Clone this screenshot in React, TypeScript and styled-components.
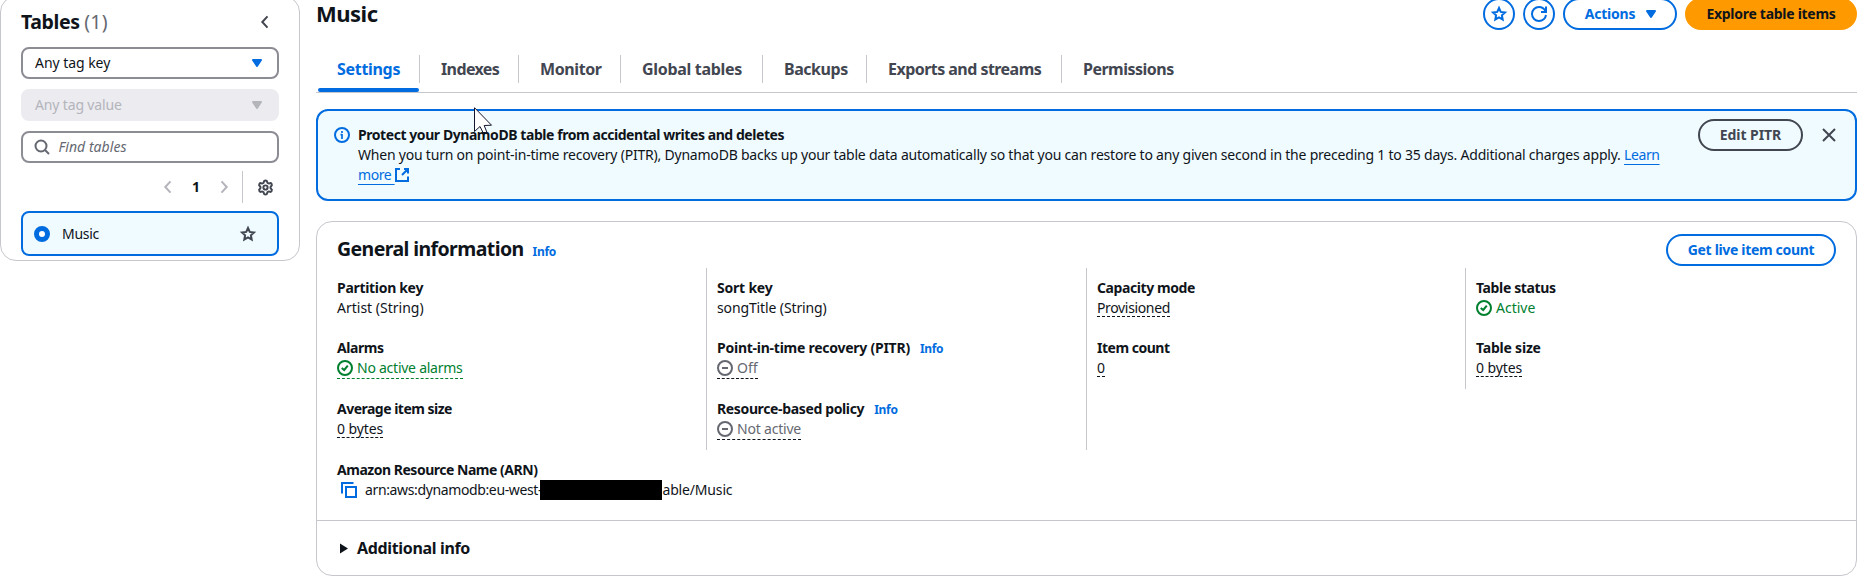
import React from "react";
import styled, { createGlobalStyle, css } from "styled-components";
import { Settings } from "lucide-react";

const color = {
  text: "#0f141a",
  muted: "#656871",
  icon: "#424650",
  blue: "#006ce0",
  paleBlue: "#f0fbff",
  green: "#00802f",
  line: "#c6c6cd",
  field: "#8c8c94",
  disabled: "#b4b4bb",
  disabledBg: "#ebebf0",
  orange: "#ff9900",
};

const GlobalStyle = createGlobalStyle`
  *, *::before, *::after { box-sizing: border-box; }
  body {
    margin: 0;
    background: #fff;
    color: ${color.text};
    font: 400 14px/20px "Noto Sans", sans-serif;
    overflow: hidden;
  }
  button { font: inherit; cursor: pointer; }
  svg { display: block; flex: none; }
`;

/* ---------- text ---------- */

interface TextProps {
  $track?: number;
  $bold?: boolean;
}

const Text = styled.span<TextProps>`
  white-space: nowrap;
  letter-spacing: ${(p) => (p.$track ?? 0) - (p.$bold ? 0.21 : 0)}px;
  font-weight: ${(p) => (p.$bold ? 700 : 400)};
`;

const InfoLink = styled.a`
  color: ${color.blue};
  font-size: 12px;
  font-weight: 700;
  letter-spacing: -0.3px;
`;

/* ---------- icons ---------- */

const Stroke = styled.svg.attrs({ viewBox: "0 0 16 16", width: 16, height: 16 })`
  fill: none;
  stroke: currentColor;
  stroke-width: 2;
  overflow: visible;
`;

const CaretDown = () => (
  <Stroke>
    <path d="M4 5h8l-4 6-4-6Z" fill="currentColor" strokeLinejoin="round" />
  </Stroke>
);
const ChevronLeft = () => (
  <Stroke>
    <path d="M10.5 2.3 5.3 8l5.2 5.7" />
  </Stroke>
);
const ChevronRight = () => (
  <Stroke>
    <path d="m5.5 2.3 5.2 5.7-5.2 5.7" />
  </Stroke>
);
const SearchIcon = () => (
  <Stroke>
    <circle cx="7" cy="7" r="5.5" />
    <path d="m11 11 4 4" />
  </Stroke>
);
const StarIcon = () => (
  <Stroke>
    <path d="m8 2 1.75 3.9 4.25.5-3.1 2.9.8 4.3L8 11.5l-3.7 2.1.8-4.3L2 6.4l4.25-.5L8 2Z" />
  </Stroke>
);
const RefreshIcon = () => (
  <Stroke>
    <path d="M15 9c-.5 3.5-3.400 6-7 6-3.900 0-7-3.100-7-7s3.100-7 7-7c2.900 0 5.300 1.700 6.400 4.200" />
    <path d="M10 6h5V.5" />
  </Stroke>
);
const InfoIcon = () => (
  <Stroke>
    <circle cx="8" cy="8" r="7" />
    <path d="M8 4v2M6.500 7.700H8M8 7v5" strokeWidth="1.7" />
  </Stroke>
);
const CheckIcon = () => (
  <Stroke>
    <circle cx="8" cy="8" r="7" />
    <path d="m4.700 8 2.500 2 3.600-4.300" />
  </Stroke>
);
const MinusIcon = () => (
  <Stroke>
    <circle cx="8" cy="8" r="7" />
    <path d="M5 8h6" />
  </Stroke>
);
const CloseIcon = () => (
  <Stroke>
    <path d="m2 2 12 12M14 2 2 14" />
  </Stroke>
);
const CopyIcon = () => (
  <Stroke>
    <path d="M5 5h10v10H5zM1 11.500V1h11.500" />
  </Stroke>
);
const ExternalIcon = () => (
  <Stroke>
    <path d="M10 2h4v4.500M8 8l6-6M14 9.500V14H2V2h4" />
  </Stroke>
);

/* ---------- page ---------- */

const Page = styled.div`
  display: flex;
  align-items: flex-start;
  gap: 16px;
  height: 580px;
  padding-right: 7px;
`;

const Sidebar = styled.aside`
  width: 300px;
  flex: none;
  margin-top: -4px;
  padding: 13px 20px 4px;
  border: 1px solid ${color.line};
  border-radius: 16px;
`;

const SidebarHead = styled.div`
  display: flex;
  align-items: center;
  justify-content: space-between;
  height: 24px;
  margin-bottom: 13px;
  padding-right: 6px;
  color: ${color.icon};
`;

const SidebarTitle = styled.h2`
  margin: 0;
  color: ${color.text};
  font-size: 19.5px;
  font-weight: 700;
  letter-spacing: -0.4px;
  line-height: 24px;

  span {
    color: ${color.muted};
    font-weight: 400;
    letter-spacing: 0.3px;
  }
`;

const Field = styled.div<{ $disabled?: boolean }>`
  display: flex;
  align-items: center;
  justify-content: space-between;
  height: 32px;
  margin-bottom: 10px;
  padding: 0 12px;
  border: 2px solid ${(p) => (p.$disabled ? color.disabledBg : color.field)};
  border-radius: 8px;
  background: ${(p) => (p.$disabled ? color.disabledBg : "#fff")};
  color: ${(p) => (p.$disabled ? color.disabled : color.text)};

  svg {
    color: ${(p) => (p.$disabled ? color.disabled : color.blue)};
  }
`;

const SearchField = styled(Field)`
  justify-content: flex-start;
  gap: 9px;
  margin-bottom: 8px;
  padding: 0 10.5px;
  color: ${color.muted};
  font-style: italic;

  svg {
    color: ${color.muted};
  }
`;

const Pager = styled.div`
  display: flex;
  align-items: center;
  justify-content: flex-end;
  height: 32px;
  margin-bottom: 8px;
  padding-right: 5.5px;
  color: ${color.disabled};

  b {
    width: 40px;
    color: ${color.text};
    font-weight: 700;
    text-align: center;
  }
`;

const PagerDivider = styled.i`
  width: 1px;
  height: 32px;
  margin: 0 13.5px 0 10px;
  background: ${color.line};
`;

const TableCard = styled.div`
  display: flex;
  align-items: center;
  height: 45px;
  padding: 0 21px 0 11px;
  border: 2px solid ${color.blue};
  border-radius: 8px;
  background: ${color.paleBlue};

  svg {
    margin-left: auto;
    color: ${color.icon};
  }
`;

const Radio = styled.i`
  width: 16px;
  height: 16px;
  margin-right: 12px;
  border: 5px solid ${color.blue};
  border-radius: 50%;
  background: #fff;
`;

const Main = styled.main`
  position: relative;
  flex: 1;
  min-width: 0;
  margin-top: -2px;
`;

const Header = styled.header`
  display: flex;
  align-items: center;
  justify-content: space-between;
  height: 32px;
  margin-bottom: 16px;
`;

const Title = styled.h1`
  margin: 0 0 2px;
  font-size: 22px;
  font-weight: 700;
  letter-spacing: -0.5px;
  line-height: 30px;
`;

const ButtonRow = styled.div`
  display: flex;
  gap: 8px;
`;

type Tone = "blue" | "dark" | "primary";

const Button = styled.button<{ $tone?: Tone; $width: number; $menu?: boolean }>`
  display: flex;
  align-items: center;
  justify-content: center;
  gap: 8px;
  flex: none;
  width: ${(p) => p.$width}px;
  height: 32px;
  padding: 0 0 0 ${(p) => (p.$menu ? 4 : 0)}px;
  border: 2px solid;
  border-radius: 16px;
  background: transparent;
  color: ${(p) => (p.$tone === "dark" ? color.icon : color.blue)};
  ${(p) =>
    p.$tone === "primary" &&
    css`
      border-color: ${color.orange};
      background: ${color.orange};
      color: ${color.text};
    `}
`;

const Tabs = styled.nav`
  display: flex;
  height: 47px;
  margin-bottom: 16px;
  border-bottom: 1px solid ${color.line};
`;

const Tab = styled.a<{ $width: number; $active?: boolean }>`
  position: relative;
  display: flex;
  align-items: center;
  justify-content: space-between;
  width: ${(p) => p.$width}px;
  padding-left: 21px;
  color: ${(p) => (p.$active ? color.blue : color.icon)};
  font-size: 16px;

  &:not(:last-child)::after {
    content: "";
    width: 1px;
    height: 28px;
    background: ${color.line};
  }

  ${(p) =>
    p.$active &&
    css`
      &::before {
        content: "";
        position: absolute;
        inset: auto 1px 0 2px;
        height: 4px;
        border-radius: 2px;
        background: ${color.blue};
      }
    `}
`;

const Alert = styled.section`
  display: flex;
  align-items: flex-start;
  height: 92px;
  margin-bottom: 20px;
  padding: 8px 18px 0 16px;
  border: 2px solid ${color.blue};
  border-radius: 12px;
  background: ${color.paleBlue};
`;

const AlertIcon = styled.div`
  padding: 8px 8px 0 0;
  color: ${color.blue};
`;

const AlertBody = styled.div`
  flex: 1;
  margin-right: 12px;
  padding-top: 6px;

  p {
    margin: 0;
    letter-spacing: -0.212px;
  }
`;

const Link = styled.a`
  color: ${color.blue};
  letter-spacing: -0.4px;
  text-decoration: underline 1px;
  text-underline-offset: 4px;
  text-decoration-skip-ink: none;
`;

const LinkIcon = styled.span`
  display: inline-block;
  margin-left: -1px;
  color: ${color.blue};
  vertical-align: -3px;
  height: 16px;
`;

const CloseButton = styled.div`
  margin: 8px 0 0 18px;
  color: ${color.icon};
`;

const Card = styled.section`
  height: 355px;
  border: 1px solid ${color.line};
  border-radius: 16px;
`;

const CardHead = styled.div`
  display: flex;
  align-items: center;
  justify-content: space-between;
  height: 46px;
  padding: 12px 20px 2px;
`;

const CardTitle = styled.h2`
  display: flex;
  align-items: baseline;
  gap: 9px;
  margin: 0;
  font-size: 19.5px;
  line-height: 24px;
`;

const Columns = styled.div`
  display: grid;
  grid-template-columns: 369px 380px 379px 1fr;
  height: 182px;
  padding-left: 20px;
`;

const Column = styled.div<{ $short?: boolean }>`
  display: grid;
  grid-auto-rows: 61px;
  grid-template-rows: 60px;
  align-content: start;
  height: ${(p) => (p.$short ? 121 : 182)}px;
  padding: 10px 0 0 10px;
  border-left: 1px solid ${color.line};

  &:first-child {
    padding-left: 0;
    border-left: 0;
  }
`;

const Label = styled.div`
  display: flex;
  align-items: baseline;
  gap: 10px;
  height: 20px;
`;

const Value = styled.div<{ $hint?: boolean; $tone?: "green" | "grey"; $icon?: boolean }>`
  display: flex;
  gap: 4px;
  width: max-content;
  height: ${(p) => (p.$icon ? 21 : 19)}px;
  color: ${(p) => (p.$tone === "green" ? color.green : p.$tone === "grey" ? color.muted : color.text)};
  border-bottom: ${(p) => (p.$hint ? `1px dashed ${p.$tone === "green" ? color.green : color.text}` : "0")};

  svg {
    margin-top: 2px;
  }
`;

const Arn = styled.div`
  padding: 10px 20px 20px;
  border-bottom: 1px solid ${color.line};
`;

const ArnValue = styled.div`
  display: flex;
  align-items: center;
  height: 20px;
  padding-left: 4px;

  svg {
    margin-right: 8px;
    color: ${color.blue};
  }
`;

const ArnPrefix = styled(Text)`
  width: 175px;
`;

const Redacted = styled.i`
  position: relative;
  width: 122px;
  height: 20px;
  margin-right: 0.5px;
  background: #000;
`;

const Expander = styled.div`
  display: flex;
  align-items: center;
  gap: 9px;
  height: 54px;
  padding-left: 22px;
  font-size: 16px;
`;

const Pointer = styled.svg`
  position: absolute;
  left: 158px;
  top: 109px;
`;

/* ---------- data ---------- */

interface Entry {
  label: string;
  labelTrack?: number;
  value: string;
  track?: number;
  info?: boolean;
  hint?: boolean;
  icon?: "check" | "minus";
}

const columns: Entry[][] = [
  [
    { label: "Partition key", labelTrack: -0.1, value: "Artist (String)" },
    { label: "Alarms", labelTrack: -0.2, value: "No active alarms", track: -0.25, hint: true, icon: "check" },
    { label: "Average item size", labelTrack: -0.3, value: "0 bytes", track: -0.1, hint: true },
  ],
  [
    { label: "Sort key", value: "songTitle (String)", track: -0.12 },
    { label: "Point-in-time recovery (PITR)", labelTrack: -0.04, value: "Off", info: true, hint: true, icon: "minus" },
    { label: "Resource-based policy", labelTrack: -0.15, value: "Not active", track: -0.2, info: true, hint: true, icon: "minus" },
  ],
  [
    { label: "Capacity mode", labelTrack: -0.2, value: "Provisioned", track: -0.35, hint: true },
    { label: "Item count", labelTrack: -0.28, value: "0", hint: true },
  ],
  [
    { label: "Table status", labelTrack: -0.15, value: "Active", icon: "check" },
    { label: "Table size", value: "0 bytes", track: -0.1, hint: true },
  ],
];

const tabs = [
  { name: "Settings", width: 104, track: -0.1 },
  { name: "Indexes", width: 99, track: -0.4 },
  { name: "Monitor", width: 102, track: -0.2 },
  { name: "Global tables", width: 142, track: -0.1 },
  { name: "Backups", width: 104, track: -0.25 },
  { name: "Exports and streams", width: 195, track: -0.33 },
  { name: "Permissions", width: 132, track: -0.3 },
];

function Detail({ entry }: { entry: Entry }) {
  const tone = entry.icon === "check" ? "green" : entry.icon === "minus" ? "grey" : undefined;
  return (
    <div>
      <Label>
        <Text $bold $track={entry.labelTrack}>{entry.label}</Text>
        {entry.info && <InfoLink>Info</InfoLink>}
      </Label>
      <Value $hint={entry.hint} $tone={tone} $icon={!!entry.icon}>
        {entry.icon === "check" && <CheckIcon />}
        {entry.icon === "minus" && <MinusIcon />}
        <Text $track={entry.track}>{entry.value}</Text>
      </Value>
    </div>
  );
}

export default function App() {
  return (
    <Page>
      <GlobalStyle />
      <Sidebar>
        <SidebarHead>
          <SidebarTitle>
            Tables <span>(1)</span>
          </SidebarTitle>
          <ChevronLeft />
        </SidebarHead>
        <Field>
          <Text $track={-0.05}>Any tag key</Text>
          <CaretDown />
        </Field>
        <Field $disabled>
          <Text $track={-0.15}>Any tag value</Text>
          <CaretDown />
        </Field>
        <SearchField>
          <SearchIcon />
          <Text $track={0.05}>Find tables</Text>
        </SearchField>
        <Pager>
          <ChevronLeft />
          <b>1</b>
          <ChevronRight />
          <PagerDivider />
          <Settings size={17} strokeWidth={2.8} color={color.icon} />
        </Pager>
        <TableCard>
          <Radio />
          <Text $track={-0.3}>Music</Text>
          <StarIcon />
        </TableCard>
      </Sidebar>

      <Main>
        <Header>
          <Title>Music</Title>
          <ButtonRow>
            <Button $width={32} aria-label="Favorite">
              <StarIcon />
            </Button>
            <Button $width={32} aria-label="Refresh">
              <RefreshIcon />
            </Button>
            <Button $width={114} $menu>
              <Text $bold>Actions</Text>
              <CaretDown />
            </Button>
            <Button $width={172} $tone="primary">
              <Text $bold $track={-0.07}>Explore table items</Text>
            </Button>
          </ButtonRow>
        </Header>

        <Tabs>
          {tabs.map((tab, i) => (
            <Tab key={tab.name} $width={tab.width} $active={i === 0}>
              <Text $bold $track={tab.track}>{tab.name}</Text>
            </Tab>
          ))}
        </Tabs>

        <Alert>
          <AlertIcon>
            <InfoIcon />
          </AlertIcon>
          <AlertBody>
            <Text $bold $track={-0.225}>Protect your DynamoDB table from accidental writes and deletes</Text>
            <p>
              When you turn on point-in-time recovery (PITR), DynamoDB backs up your table data automatically so that
              you can restore to any given second in the preceding 1 to 35 days. Additional charges apply.{" "}
              <Link>Learn more&nbsp;</Link>
              <LinkIcon>
                <ExternalIcon />
              </LinkIcon>
            </p>
          </AlertBody>
          <Button $width={105} $tone="dark">
            <Text $bold $track={0.15}>Edit PITR</Text>
          </Button>
          <CloseButton>
            <CloseIcon />
          </CloseButton>
        </Alert>

        <Card>
          <CardHead>
            <CardTitle>
              <Text $bold $track={-0.38}>General information</Text>
              <InfoLink>Info</InfoLink>
            </CardTitle>
            <Button $width={170}>
              <Text $bold $track={-0.12}>Get live item count</Text>
            </Button>
          </CardHead>
          <Columns>
            {columns.map((entries, i) => (
              <Column key={i} $short={i === 3}>
                {entries.map((entry) => (
                  <Detail key={entry.label} entry={entry} />
                ))}
              </Column>
            ))}
          </Columns>
          <Arn>
            <Label>
              <Text $bold $track={-0.27}>Amazon Resource Name (ARN)</Text>
            </Label>
            <ArnValue>
              <CopyIcon />
              <ArnPrefix $track={-0.37}>arn:aws:dynamodb:eu-west-</ArnPrefix>
              <Redacted />
              <Text $track={-0.17}>able/Music</Text>
            </ArnValue>
          </Arn>
          <Expander>
            <svg width="9" height="11" viewBox="0 0 9 11">
              <path d="M1 .5 9 5.500 1 10.500Z" fill={color.text} />
            </svg>
            <Text $bold $track={-0.13}>Additional info</Text>
          </Expander>
        </Card>

        <Pointer width="20" height="28" viewBox="0 0 20 28">
          <path d="M.5.700V24.500L6 19.500l3 6h4l-2.800-7 7.300-.3Z" fill="#fff" stroke="#14142b" />
        </Pointer>
      </Main>
    </Page>
  );
}
